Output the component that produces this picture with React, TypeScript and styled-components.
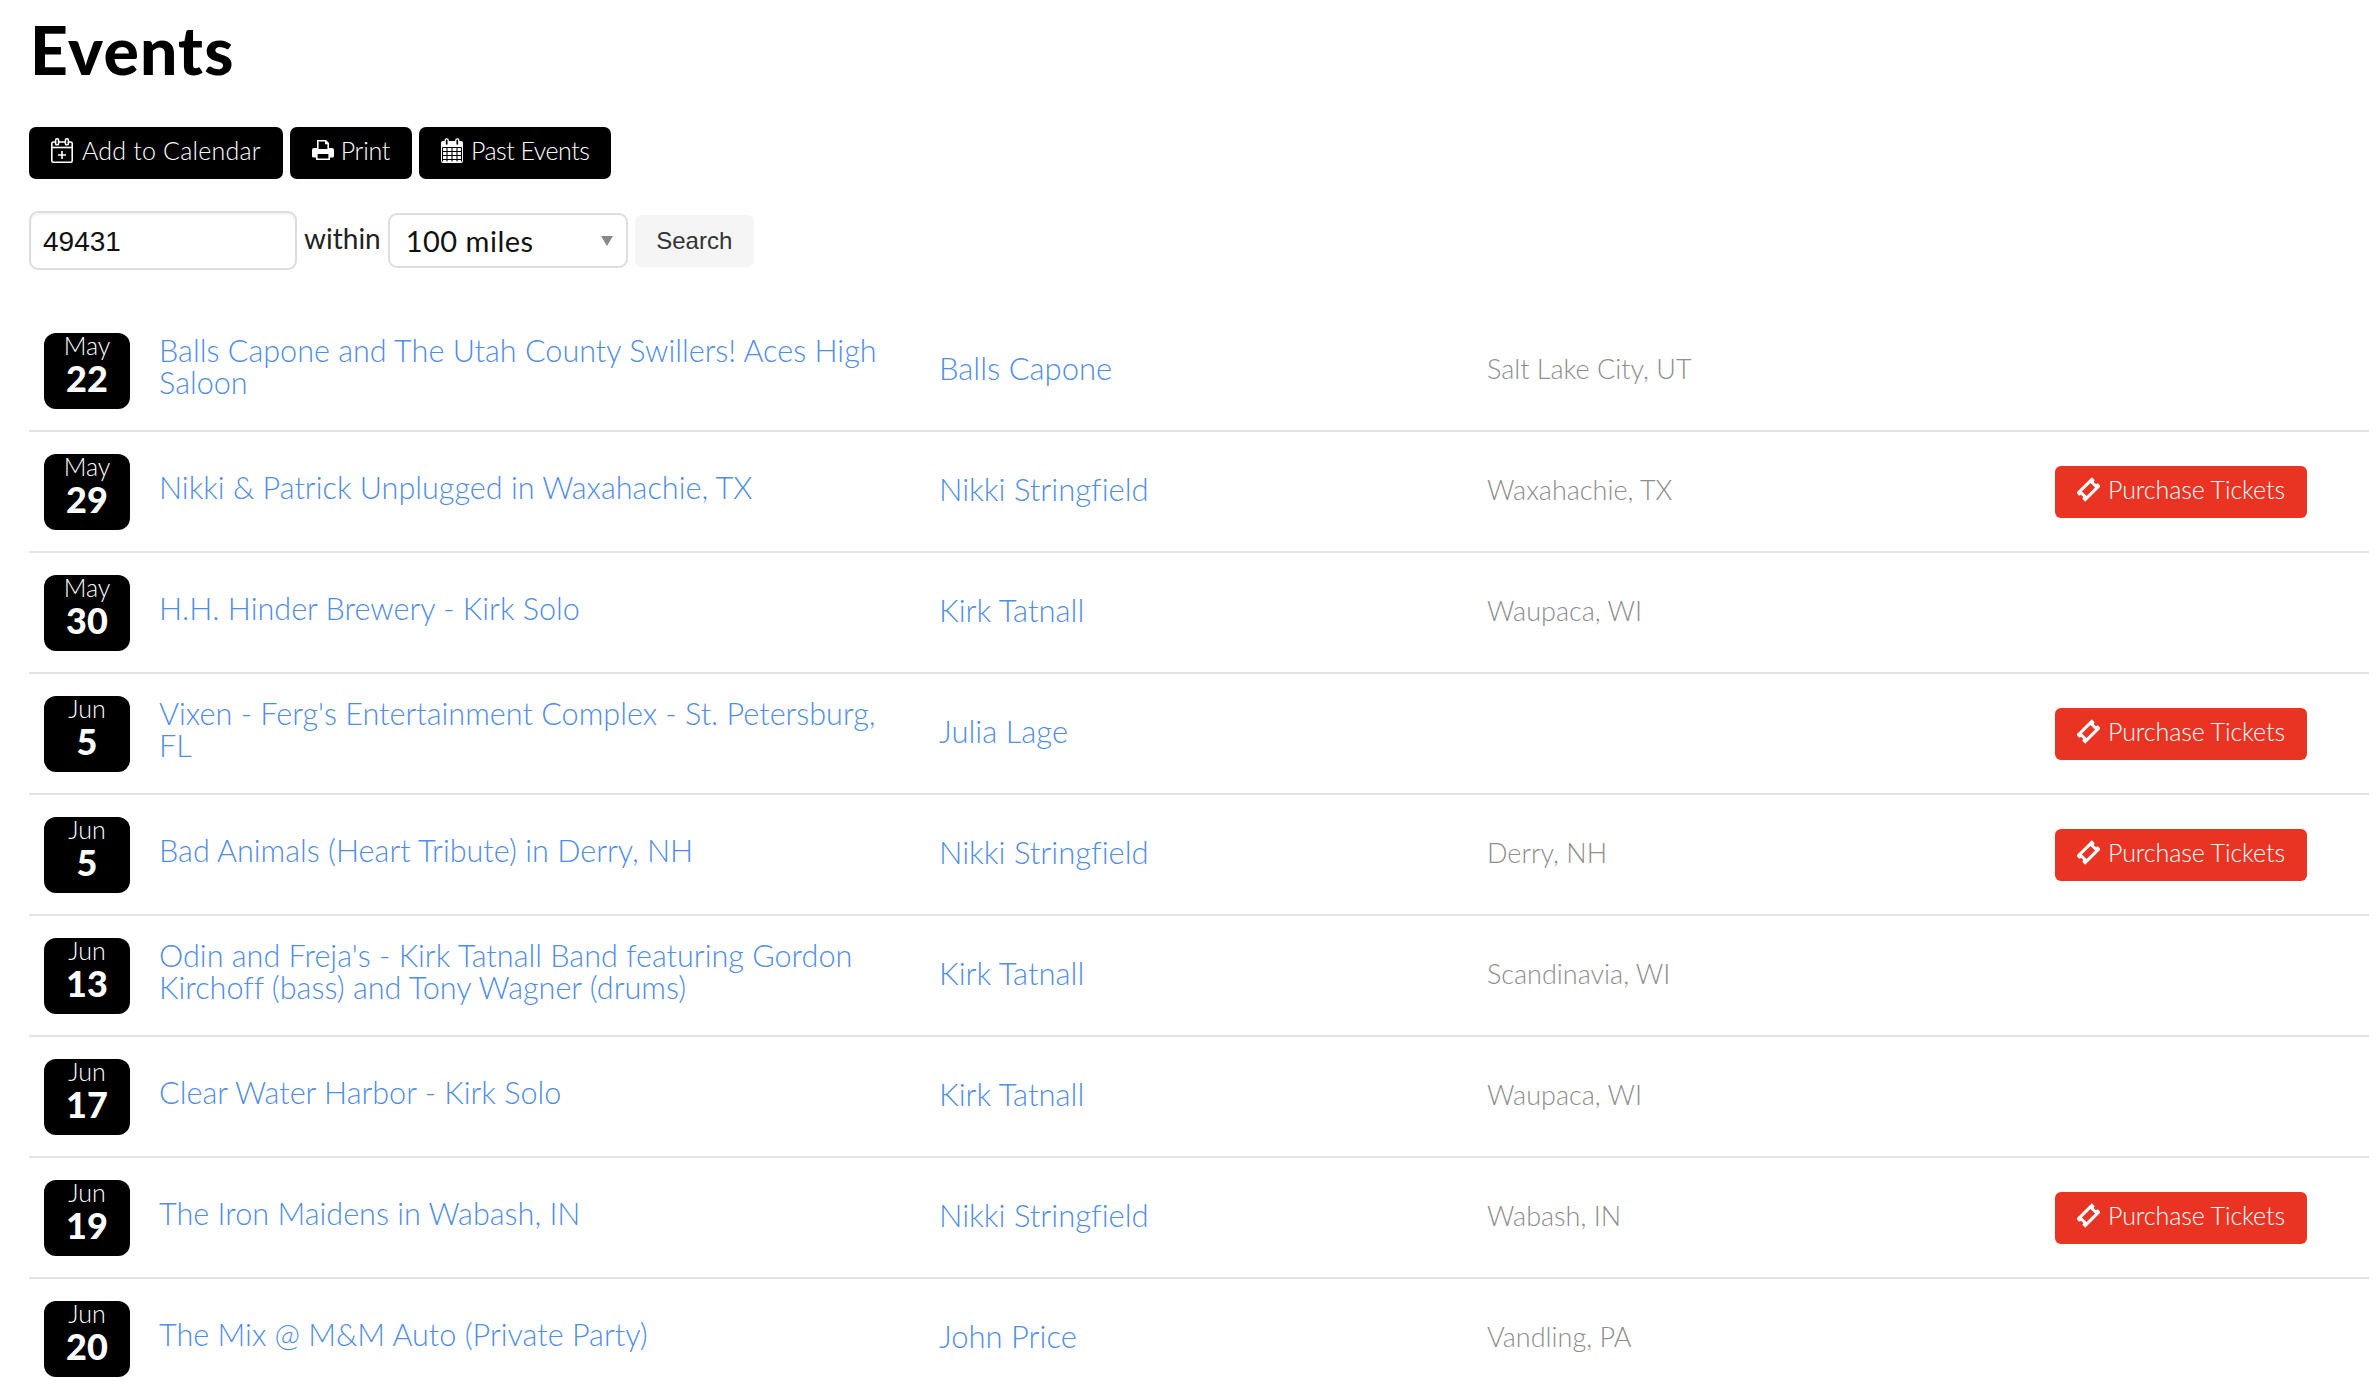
import React from "react";
import styled, { createGlobalStyle } from "styled-components";

interface EventRow {
  month: string;
  day: number;
  title: string;
  artist: string;
  location: string;
  tickets?: boolean;
}

const events: EventRow[] = [
  { month: "May", day: 22, title: "Balls Capone and The Utah County Swillers! Aces High Saloon", artist: "Balls Capone", location: "Salt Lake City, UT" },
  { month: "May", day: 29, title: "Nikki & Patrick Unplugged in Waxahachie, TX", artist: "Nikki Stringfield", location: "Waxahachie, TX", tickets: true },
  { month: "May", day: 30, title: "H.H. Hinder Brewery - Kirk Solo", artist: "Kirk Tatnall", location: "Waupaca, WI" },
  { month: "Jun", day: 5, title: "Vixen - Ferg's Entertainment Complex - St. Petersburg, FL", artist: "Julia Lage", location: "", tickets: true },
  { month: "Jun", day: 5, title: "Bad Animals (Heart Tribute) in Derry, NH", artist: "Nikki Stringfield", location: "Derry, NH", tickets: true },
  { month: "Jun", day: 13, title: "Odin and Freja's - Kirk Tatnall Band featuring Gordon Kirchoff (bass) and Tony Wagner (drums)", artist: "Kirk Tatnall", location: "Scandinavia, WI" },
  { month: "Jun", day: 17, title: "Clear Water Harbor - Kirk Solo", artist: "Kirk Tatnall", location: "Waupaca, WI" },
  { month: "Jun", day: 19, title: "The Iron Maidens in Wabash, IN", artist: "Nikki Stringfield", location: "Wabash, IN", tickets: true },
  { month: "Jun", day: 20, title: "The Mix @ M&M Auto (Private Party)", artist: "John Price", location: "Vandling, PA" },
];

function CalendarPlusIcon() {
  return (
    <svg width="22" height="25" viewBox="0 0 22 25" fill="none" stroke="#fff" strokeWidth="1.6">
      <rect x="0.8" y="4" width="20.4" height="20.2" rx="1.5" />
      <path d="M0.8 9.5h20.4" />
      <rect x="4.6" y="0.8" width="3" height="6" rx="1.4" fill="#000" />
      <rect x="14.4" y="0.8" width="3" height="6" rx="1.4" fill="#000" />
      <path d="M11 13v8M7 17h8" />
    </svg>
  );
}

function PrintIcon() {
  return (
    <svg width="22" height="20" viewBox="0 0 22 20">
      <path fill="#fff" fillRule="evenodd" d="M5 0h9l3 3v5h3a2 2 0 0 1 2 2v6a1.5 1.5 0 0 1-1.5 1.5H18V20H4v-2.500H1.500A1.500 1.500 0 0 1 0 16v-6a2 2 0 0 1 2-2h3V0zm1.600 1.600V9h8.800V4.200h-2.400V1.600H6.600zM5.600 14v4.400h10.800V14H5.600z" />
    </svg>
  );
}

function CalendarGridIcon() {
  return (
    <svg width="22" height="25" viewBox="0 0 22 25" fill="none">
      <rect x="0" y="3" width="22" height="22" rx="2" fill="#fff" />
      <rect x="4.200" y="0.800" width="3" height="6.500" rx="1.400" fill="#000" stroke="#fff" strokeWidth="1.300" />
      <rect x="14.800" y="0.800" width="3" height="6.500" rx="1.400" fill="#000" stroke="#fff" strokeWidth="1.300" />
      <path stroke="#000" strokeWidth="1.100" d="M1.500 9.500h19M1.500 13.500h19M1.500 17.500h19M1.500 21.500h19M1.500 9.500v14M6 9.500v14M11 9.500v14M16 9.500v14M20.500 9.500v14" />
    </svg>
  );
}

function TicketIcon() {
  return (
    <svg width="23" height="25" viewBox="0 0 23 25" fill="none">
      <g transform="rotate(-45 11.500 12.500)">
        <path fill="#fff" d="M0.500 6.200h22v4.100a2.200 2.200 0 0 0 0 4.400v4.100h-22v-4.100a2.200 2.200 0 0 0 0-4.400V6.200z" />
        <rect x="5.500" y="9.200" width="12" height="6.600" fill="#e93323" />
      </g>
    </svg>
  );
}

export default function App() {
  return (
    <>
      <GlobalStyle />
      <Page>
        <Title>Events</Title>
        <Toolbar>
          <ToolButton $gap={9} $spacing={0.2}>
            <CalendarPlusIcon />
            Add to Calendar
          </ToolButton>
          <ToolButton $gap={7} $spacing={-0.3}>
            <PrintIcon />
            Print
          </ToolButton>
          <ToolButton $gap={8} $spacing={-0.5}>
            <CalendarGridIcon />
            Past Events
          </ToolButton>
        </Toolbar>
        <SearchForm>
          <ZipInput defaultValue="49431" />
          <Within>within</Within>
          <SelectWrap>
            <DistanceSelect defaultValue="100">
              <option value="100">100 miles</option>
            </DistanceSelect>
          </SelectWrap>
          <SearchButton>Search</SearchButton>
        </SearchForm>
        <EventList>
          {events.map((ev, i) => (
            <Row key={i}>
              <DateBadge>
                <Month>{ev.month}</Month>
                <Day>{ev.day}</Day>
              </DateBadge>
              <EventTitle href="#">{ev.title}</EventTitle>
              <ArtistLink href="#">{ev.artist}</ArtistLink>
              <Location>{ev.location}</Location>
              <div>
                {ev.tickets && (
                  <TicketButton>
                    <TicketIcon />
                    Purchase Tickets
                  </TicketButton>
                )}
              </div>
            </Row>
          ))}
        </EventList>
      </Page>
    </>
  );
}

const GlobalStyle = createGlobalStyle`
  html, body {
    margin: 0;
    padding: 0;
    background: #fff;
    overflow: hidden;
  }
  body {
    font-family: "Lato", "Liberation Sans", sans-serif;
    font-variant-ligatures: none;
  }
`;

const Page = styled.div`
  width: 2380px;
  height: 1398px;
  padding: 0 11px 0 29px;
  box-sizing: border-box;
  overflow: hidden;
`;

const Title = styled.h1`
  margin: 0;
  height: 100px;
  line-height: 100px;
  font-size: 66px;
  font-weight: 900;
  letter-spacing: 1.2px;
  color: #000;
  padding-left: 1px;
`;

const Toolbar = styled.div`
  display: flex;
  gap: 7px;
  margin-top: 27px;
`;

const ToolButton = styled.button<{ $gap: number; $spacing: number }>`
  display: flex;
  align-items: center;
  gap: ${(p) => p.$gap}px;
  height: 52px;
  padding: 0 22px 6px;
  border: 0;
  border-radius: 7px;
  background: #000;
  color: #fff;
  font-family: "Lato", sans-serif;
  font-size: 25px;
  font-weight: 300;
  letter-spacing: ${(p) => p.$spacing}px;
`;

const SearchForm = styled.div`
  display: flex;
  align-items: center;
  margin-top: 32px;
  height: 59px;
`;

const ZipInput = styled.input`
  width: 268px;
  height: 59px;
  box-sizing: border-box;
  padding: 2px 12px 0;
  border: 2px solid #ddd;
  border-radius: 9px;
  box-shadow: inset 0 2px 2px rgba(0, 0, 0, 0.05);
  outline: none;
  color: #111;
  font-family: "Liberation Sans", sans-serif;
  font-size: 28px;
`;

const Within = styled.span`
  margin: -5px 7px 0;
  font-size: 28px;
  font-weight: 400;
  color: #222;
`;

const SelectWrap = styled.div`
  position: relative;
  &::after {
    content: "";
    position: absolute;
    top: 23px;
    right: 15px;
    border-left: 6px solid transparent;
    border-right: 6px solid transparent;
    border-top: 10px solid #888;
    pointer-events: none;
  }
`;

const DistanceSelect = styled.select`
  display: block;
  appearance: none;
  width: 240px;
  height: 55px;
  padding: 0 16px;
  border: 2px solid #ddd;
  border-radius: 9px;
  background: #fff;
  color: #111;
  font-family: "Lato", sans-serif;
  font-size: 29px;
  letter-spacing: 0.5px;
`;

const SearchButton = styled.button`
  width: 119px;
  height: 52px;
  margin-left: 7px;
  border: 0;
  border-radius: 7px;
  background: #f5f5f5;
  color: #333;
  font-family: "Liberation Sans", sans-serif;
  font-size: 24px;
`;

const EventList = styled.div`
  margin-top: 41px;
`;

const Row = styled.div`
  display: grid;
  grid-template-columns: 116px 783px 551px 561px 1fr;
  align-items: center;
  height: 121px;
  padding-left: 15px;
  box-sizing: border-box;
  border-bottom: 2px solid #e4e4e4;
`;

const DateBadge = styled.div`
  display: flex;
  flex-direction: column;
  align-items: center;
  width: 86px;
  height: 76px;
  border-radius: 12px;
  background: #000;
  color: #fff;
`;

const Month = styled.div`
  margin-top: -3px;
  height: 30px;
  line-height: 30px;
  font-size: 25px;
  font-weight: 300;
`;

const Day = styled.div`
  height: 36px;
  line-height: 36px;
  font-size: 36px;
  font-weight: 900;
`;

const EventTitle = styled.a`
  display: block;
  max-width: 745px;
  margin-left: -1px;
  margin-top: -7px;
  line-height: 32px;
  font-size: 30.6px;
  font-weight: 300;
  color: #4f8de6;
  text-decoration: none;
`;

const ArtistLink = styled.a`
  margin-left: -4px;
  margin-top: -6px;
  font-size: 31px;
  font-weight: 300;
  color: #4f8de6;
  text-decoration: none;
`;

const Location = styled.div`
  margin-left: -7px;
  margin-top: -4px;
  font-size: 27px;
  font-weight: 300;
  color: #8d8d8d;
`;

const TicketButton = styled.button`
  display: flex;
  align-items: center;
  gap: 8px;
  height: 52px;
  padding: 0 22px 5px;
  border: 0;
  border-radius: 6px;
  background: #e93323;
  color: #fff;
  font-family: "Lato", sans-serif;
  font-size: 25px;
  font-weight: 300;
  letter-spacing: -0.1px;
`;
